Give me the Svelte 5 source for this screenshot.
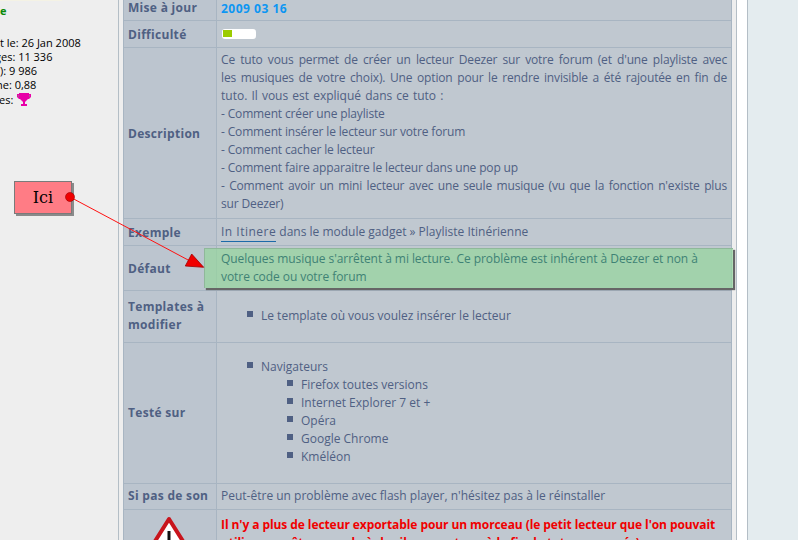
<script>
  const nav = ['Firefox toutes versions', 'Internet Explorer 7 et +', 'Opéra', 'Google Chrome', 'Kméléon'];
  const how = [
    'Comment créer une playliste',
    'Comment insérer le lecteur sur votre forum',
    'Comment cacher le lecteur',
    'Comment faire apparaitre le lecteur dans une pop up'
  ];
</script>

<div class="page">
  <aside class="side">
    <div class="topline"></div>
    <div class="online">e</div>
    <div class="stats">
      <div>t le: 26 Jan 2008</div>
      <div class="s2">ges: 11 336</div>
      <div>): 9 986</div>
      <div class="s4">ne: 0,88</div>
      <div class="trophy-row">
        <span>es:</span>
        <svg width="16" height="16" viewBox="0 0 16 16">
          <path d="M3 1h10v1h2v3l-2 2h-1l-2 2-1 1v2h2v2H5v-2h2v-2L6 9 4 7H3L1 5V2h2z" fill="#e800a8" />
          <path d="M2 3h1v3zM14 3h-1v3z" fill="#8a8a8a" />
        </svg>
      </div>
    </div>
  </aside>

  <main class="wrap">
    <table>
      <colgroup>
        <col class="c-head" />
        <col />
      </colgroup>
      <tbody>
        <tr class="r-date">
          <th>Mise à jour</th>
          <td class="date">2009 03 16</td>
        </tr>
        <tr class="r-level">
          <th class="low">Difficulté</th>
          <td><div class="meter"><span></span></div></td>
        </tr>
        <tr>
          <th class="low">Description</th>
          <td class="just">
            <p class="fit">Ce tuto vous permet de créer un lecteur Deezer sur votre forum (et d'une playliste avec</p>
            <p class="fit">les musiques de votre choix). Une option pour le rendre invisible a été rajoutée en fin de</p>
            <p class="wide">tuto. Il vous est expliqué dans ce tuto :</p>
            {#each how as line}
              <p>- {line}</p>
            {/each}
            <p class="fit">- Comment avoir un mini lecteur avec une seule musique (vu que la fonction n'existe plus</p>
            <p>sur Deezer)</p>
          </td>
        </tr>
        <tr class="r-ex">
          <th class="low">Exemple</th>
          <td><p><a href="#ex">In Itinere</a> dans le module gadget » Playliste Itinérienne</p></td>
        </tr>
        <tr class="r-def">
          <th class="low">Défaut</th>
          <td></td>
        </tr>
        <tr class="r-tpl">
          <th>Templates à<br />modifier</th>
          <td>
            <ul><li>Le template où vous voulez insérer le lecteur</li></ul>
          </td>
        </tr>
        <tr class="r-test">
          <th>Testé sur</th>
          <td>
            <ul>
              <li>Navigateurs
                <ul>
                  {#each nav as item}
                    <li>{item}</li>
                  {/each}
                </ul>
              </li>
            </ul>
          </td>
        </tr>
        <tr class="r-son">
          <th>Si pas de son</th>
          <td><p>Peut-être un problème avec flash player, n'hésitez pas à le réinstaller</p></td>
        </tr>
        <tr class="r-warn">
          <th>
            <svg class="warn" width="40" height="32" viewBox="0 0 40 32">
              <path d="M20 3 37 30H3z" fill="#fff" stroke="#c8141c" stroke-width="4" stroke-linejoin="round" />
              <rect x="18.5" y="15" width="3" height="12" fill="#111" />
            </svg>
          </th>
          <td class="alert">
            <p>Il n'y a plus de lecteur exportable pour un morceau (le petit lecteur que l'on pouvait</p>
            <p>utiliser en pêtre exendu à des ils ne sont pas à la fin de tuto concernés)</p>
          </td>
        </tr>
      </tbody>
    </table>
  </main>

  <div class="gutter"></div>
  <div class="sliver"></div>
  <div class="far"></div>

  <div class="note">
    Quelques musique s'arrêtent à mi lecture. Ce problème est inhérent à Deezer et non à<br />
    votre code ou votre forum
  </div>

  <div class="ici">Ici</div>

  <svg class="arrow" width="798" height="540" viewBox="0 0 798 540">
    <line x1="70" y1="197" x2="190" y2="261" stroke="#ff1010" stroke-width="1" />
    <circle cx="70" cy="197" r="4.5" fill="#f00000" stroke="#900" stroke-width="0.6" />
    <path d="M191.7 254 203.7 267.3 185.3 266z" fill="#f00000" stroke="#a00000" stroke-width="0.8" />
  </svg>
</div>

<style>
  :global(body) {
    margin: 0;
  }
  .page {
    position: relative;
    display: flex;
    width: 798px;
    height: 540px;
    overflow: hidden;
    background: #eeeeee;
    font-family: "Open Sans", "DejaVu Sans", sans-serif;
    font-size: 12px;
    color: #4f6083;
  }
  .side {
    flex: none;
    width: 118px;
    height: 540px;
    color: #000;
    border-right: 1px solid #b4bec6;
    font-size: 11px;
    line-height: 14px;
  }
  .topline {
    height: 1px;
    width: 62px;
    background: #f4f2e4;
  }
  .online {
    margin-top: 3px;
    color: #0a8a0a;
    font-weight: 700;
    height: 14px;
  }
  .stats {
    margin-top: 18px;
  }
  .s2 {
    margin-left: -5px;
  }
  .s4 {
    margin-left: -4px;
  }
  .trophy-row {
    display: flex;
    align-items: center;
    gap: 3px;
    margin-left: -1px;
  }
  .wrap {
    flex: none;
    width: 607px;
    margin-left: 4px;
    border-left: 1px solid #a8b5c2;
    border-right: 1px solid #a8b5c2;
    background: #c0c8d0;
    height: 540px;
    overflow: hidden;
  }
  table {
    width: 607px;
    border-collapse: collapse;
    table-layout: fixed;
    margin-top: -1px;
  }
  .c-head {
    width: 92.5px;
  }
  th,
  td {
    box-sizing: border-box;
    line-height: 18px;
    border-bottom: 1px solid #a8b5c2;
  }
  th {
    padding: 0 0 0 4px;
    text-align: left;
    font-weight: 700;
    letter-spacing: 0.3px;
    color: #4f6083;
    background: #bcc5cf;
    border-right: 1px solid #a8b5c2;
  }
  th.low {
    padding-top: 2px;
  }
  .r-date th {
    padding-bottom: 2px;
  }
  td {
    padding: 0 4px;
    vertical-align: middle;
  }
  p {
    margin: 0;
    white-space: nowrap;
  }
  .fit {
    white-space: normal;
    text-align: justify;
    text-align-last: justify;
  }
  .r-date th,
  .r-date td {
    height: 21px;
  }
  .date {
    color: #0d96f2;
    font-weight: 700;
    letter-spacing: 0.5px;
  }
  .r-level th,
  .r-level td {
    height: 27px;
  }
  .meter {
    display: flex;
    align-items: center;
    box-sizing: border-box;
    width: 34px;
    height: 10px;
    margin-left: 1px;
    padding-left: 1px;
    border-radius: 3px;
    background: #fff;
  }
  .meter span {
    display: block;
    width: 9px;
    height: 7px;
    background: #9ccc00;
  }
  .just {
    padding-top: 3px;
    padding-bottom: 5px;
    letter-spacing: -0.15px;
  }
  .wide {
    letter-spacing: 0;
    word-spacing: 1px;
  }
  .r-ex td,
  .r-ex th {
    height: 27px;
  }
  .r-ex a {
    color: inherit;
    text-decoration: none;
    letter-spacing: 0.5px;
    padding-bottom: 1px;
    border-bottom: 1px solid #1c6aa8;
  }
  .r-def td,
  .r-def th {
    height: 45px;
  }
  .r-tpl td,
  .r-tpl th {
    height: 52px;
  }
  ul {
    margin: 0;
    padding: 0 0 0 40px;
    list-style: none;
  }
  ul ul {
    padding-left: 40px;
  }
  li {
    position: relative;
  }
  li::before {
    content: "";
    position: absolute;
    left: -14px;
    top: 4px;
    width: 6px;
    height: 6px;
    background: #4f6083;
  }
  .r-test td {
    height: 141px;
    vertical-align: top;
    padding-top: 15px;
  }
  .r-son th,
  .r-son td {
    height: 26px;
  }
  .r-warn th {
    text-align: center;
    vertical-align: top;
    padding: 6px 0 0;
    border-bottom: 0;
  }
  .warn {
    display: block;
    margin: 0 auto;
    transform: translateX(-1px);
  }
  .r-warn td {
    vertical-align: top;
    padding-top: 6px;
    border-bottom: 0;
  }
  .alert {
    color: #f00000;
    font-weight: 700;
    letter-spacing: -0.08px;
  }
  .gutter {
    flex: none;
    width: 5px;
    box-sizing: border-box;
    border-right: 1px solid #b4bec6;
  }
  .sliver {
    flex: none;
    width: 10px;
    background: #fff;
  }
  .far {
    flex: 1;
    border-left: 1px solid #b4bec6;
    background: #e4ecef;
  }
  .note {
    position: absolute;
    left: 204px;
    top: 248px;
    box-sizing: border-box;
    width: 529px;
    height: 40px;
    padding: 1px 0 0 16px;
    background: rgba(149, 213, 157, 0.7);
    border-top: 1px solid #8fb89a;
    border-left: 1px solid #8fb89a;
    box-shadow: 2px 2px 1px #666;
    color: #3f8275;
    line-height: 18px;
    letter-spacing: -0.06px;
    white-space: nowrap;
  }
  .ici {
    position: absolute;
    left: 14px;
    top: 181px;
    box-sizing: border-box;
    width: 58px;
    height: 33px;
    background: #ff7c85;
    border: 1px solid #7a7a7a;
    box-shadow: 2px 2px 0 #8a8a8a;
    color: #000;
    font-family: "DejaVu Serif", serif;
    font-size: 16px;
    line-height: 31px;
    text-align: center;
  }
  .arrow {
    position: absolute;
    left: 0;
    top: 0;
    pointer-events: none;
  }
</style>
